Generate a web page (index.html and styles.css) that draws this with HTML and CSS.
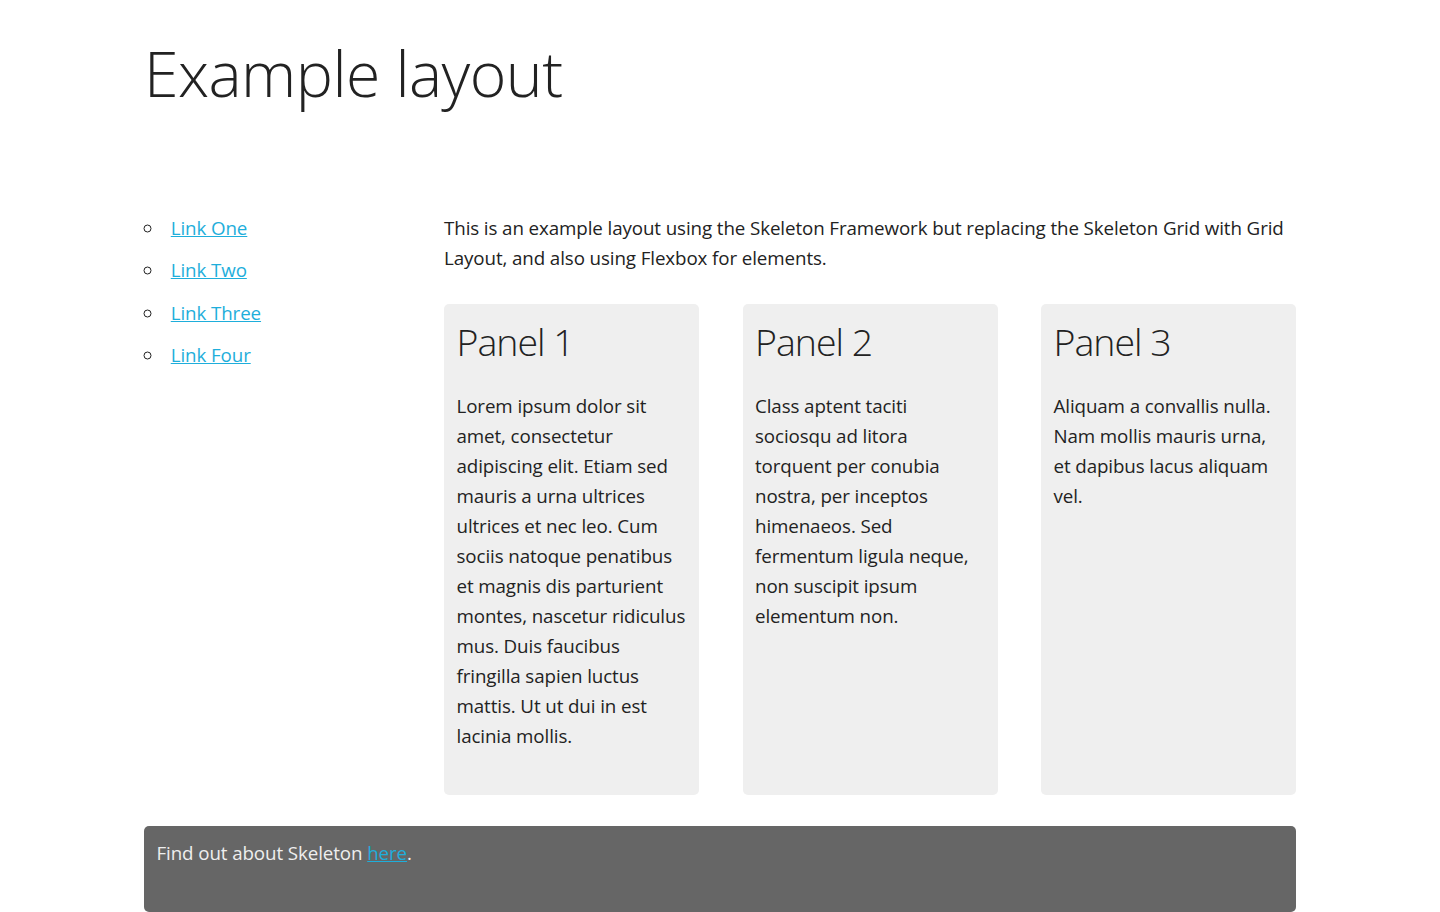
FILE: index.html
```html
<!DOCTYPE html>
<html lang="en">
<head>
<meta charset="utf-8">
<title>Example layout</title>
<link rel="stylesheet" href="styles.css">
</head>
<body>
<div class="container">
  <header class="header">
    <h1 class="title">Example layout</h1>
  </header>
  <div class="layout">
    <nav class="sidebar">
      <ul class="nav-list">
        <li><a href="#">Link One</a></li>
        <li><a href="#">Link Two</a></li>
        <li><a href="#">Link Three</a></li>
        <li><a href="#">Link Four</a></li>
      </ul>
    </nav>
    <main class="main">
      <p class="intro">This is an example layout using the Skeleton Framework but replacing the Skeleton Grid with Grid Layout, and also using Flexbox for elements.</p>
      <div class="panels">
        <section class="panel">
          <h4 class="panel-title">Panel 1</h4>
          <p>Lorem ipsum dolor sit amet, consectetur adipiscing elit. Etiam sed mauris a urna ultrices ultrices et nec leo. Cum sociis natoque penatibus et magnis dis parturient montes, nascetur ridiculus mus. Duis faucibus fringilla sapien luctus mattis. Ut ut dui in est lacinia mollis.</p>
        </section>
        <section class="panel">
          <h4 class="panel-title">Panel 2</h4>
          <p>Class aptent taciti sociosqu ad litora torquent per conubia nostra, per inceptos himenaeos. Sed fermentum ligula neque, non suscipit ipsum elementum non.</p>
        </section>
        <section class="panel">
          <h4 class="panel-title">Panel 3</h4>
          <p>Aliquam a convallis nulla. Nam mollis mauris urna, et dapibus lacus aliquam vel.</p>
        </section>
      </div>
    </main>
  </div>
  <footer class="footer">
    <p>Find out about Skeleton <a href="#">here</a>.</p>
  </footer>
</div>
</body>
</html>
```
FILE: styles.css
```css
html, body {
  margin: 0;
  padding: 0;
  background: #fff;
}

body {
  font-family: "Open Sans", "Lato", sans-serif;
  font-size: 18.75px;
  line-height: 30px;
  font-weight: 400;
  color: #222;
  letter-spacing: -0.1px;
}

a {
  color: #1eaedb;
}

p {
  margin: 0 0 31.25px;
}

.container {
  width: 1152px;
  margin: 0 auto;
}

.header {
  padding-top: 35px;
}

.title {
  margin: 0 0 103px;
  font-size: 62.5px;
  line-height: 75px;
  font-weight: 300;
  letter-spacing: -0.55px;
}

.layout {
  display: grid;
  grid-template-columns: 1fr 3fr;
  column-gap: 16px;
}

.nav-list {
  list-style: circle inside;
  margin: 0;
  padding: 0;
}

.nav-list li {
  margin-bottom: 12.25px;
}

.panels {
  display: grid;
  grid-template-columns: repeat(3, 1fr);
  column-gap: 43.5px;
}

.panel {
  background: #efefef;
  border-radius: 5px;
  padding: 12.5px;
}

.panel-title {
  margin: 0 0 24px;
  font-size: 37.5px;
  line-height: 50px;
  font-weight: 300;
  letter-spacing: -1px;
}

.footer {
  margin-top: 31px;
  background: #666;
  border-radius: 5px;
  padding: 12.5px;
  color: #eee;
}
```
